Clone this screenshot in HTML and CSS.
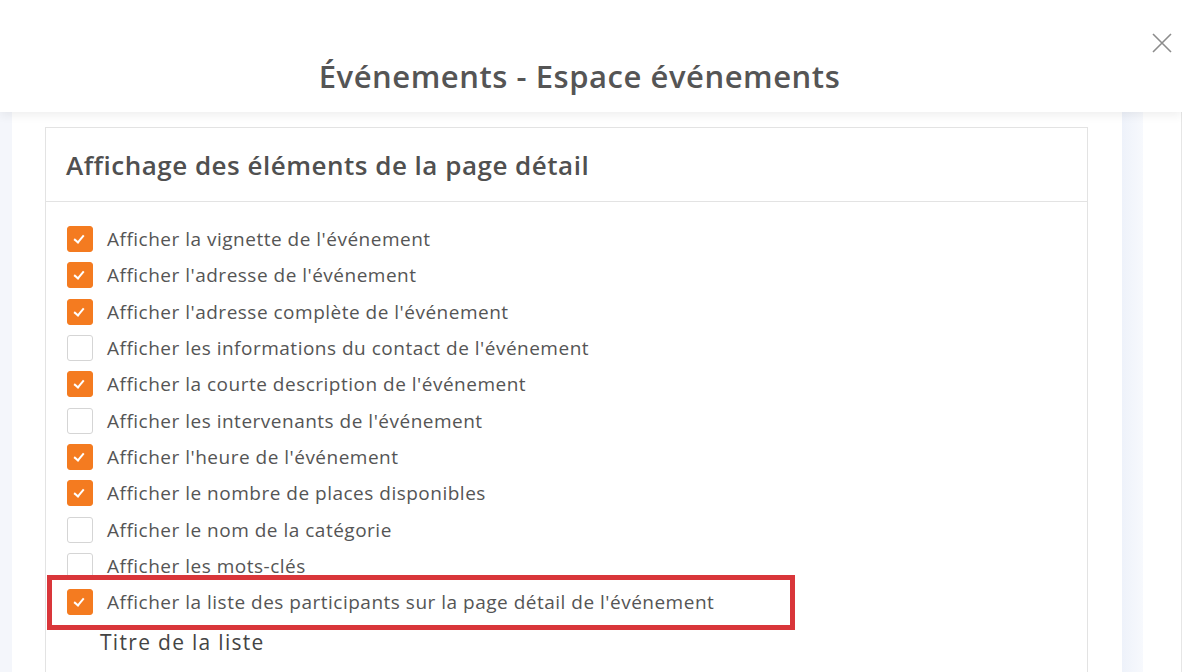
FILE: index.html
```html
<!DOCTYPE html>
<html lang="fr">
<head>
  <meta charset="UTF-8">
  <meta name="viewport" content="width=device-width, initial-scale=1.0">
  <title>Événements - Espace événements</title>
  <link rel="stylesheet" href="styles.css">
</head>
<body>

  <header class="modal-header">
    <h1>Événements - Espace événements</h1>
    <button class="close-btn" aria-label="Fermer">
      <svg width="22" height="22" viewBox="0 0 22 22"><path d="M2 2 L20 20 M20 2 L2 20" stroke="#8c8c8c" stroke-width="1.6" fill="none"/></svg>
    </button>
  </header>

  <div class="layout">
    <div class="side-left"></div>

    <main class="panel">
      <section class="card">
        <div class="card-header">
          <h2>Affichage des éléments de la page détail</h2>
        </div>

        <div class="card-body">
          <label class="option"><span class="box checked"></span>Afficher la vignette de l'événement</label>
          <label class="option"><span class="box checked"></span>Afficher l'adresse de l'événement</label>
          <label class="option"><span class="box checked"></span>Afficher l'adresse complète de l'événement</label>
          <label class="option"><span class="box"></span>Afficher les informations du contact de l'événement</label>
          <label class="option"><span class="box checked"></span>Afficher la courte description de l'événement</label>
          <label class="option"><span class="box"></span>Afficher les intervenants de l'événement</label>
          <label class="option"><span class="box checked"></span>Afficher l'heure de l'événement</label>
          <label class="option"><span class="box checked"></span>Afficher le nombre de places disponibles</label>
          <label class="option"><span class="box"></span>Afficher le nom de la catégorie</label>
          <label class="option"><span class="box"></span>Afficher les mots-clés</label>
          <label class="option highlighted"><span class="box checked"></span>Afficher la liste des participants sur la page détail de l'événement</label>

          <div class="sub-title">Titre de la liste</div>
        </div>
      </section>
    </main>

    <div class="side-strip"></div>
    <div class="side-right"></div>
  </div>

</body>
</html>
```

FILE: styles.css
```css
html, body {
  margin: 0;
  height: 100%;
  overflow: hidden;
}

body {
  font-family: 'Open Sans', 'Noto Sans', sans-serif;
  background-color: #fff;
  color: #555;
  display: flex;
  flex-direction: column;
}

.modal-header {
  position: relative;
  height: 112px;
  background-color: #fff;
  box-shadow: 0 3px 10px rgba(0, 0, 0, 0.07); /* soft edge under the header */
  z-index: 2;
  display: flex;
  align-items: center;
  justify-content: center;
  padding-right: 23px;
  flex-shrink: 0;
}

.modal-header h1 {
  margin: 40px 0 0 0;
  font-size: 31px;
  font-weight: 600;
  letter-spacing: 0.55px;
  color: #555;
}

.close-btn {
  position: absolute;
  top: 32px;
  right: 9px;
  border: none;
  background: none;
  padding: 0;
  cursor: pointer;
}

.layout {
  flex: 1;
  display: flex;
}

.side-left {
  width: 12px;
  background-color: #f4f6fb;
}

.panel {
  width: 1110px;
  background-color: #fff;
  padding: 15px 0 0 33px;
  box-sizing: border-box;
}

.side-strip {
  width: 21px;
  background: linear-gradient(to right, #eef2fa, #f7f9fd);
}

.side-right {
  flex: 1;
  background-color: #fff;
  border-right: 1px solid #e6e6e6;
}

.card {
  width: 1043px;
  height: 100%;
  border: 1px solid #e3e3e3;
  border-bottom: none;
  box-sizing: border-box;
}

.card-header {
  height: 73px;
  border-bottom: 1px solid #e3e3e3;
  display: flex;
  align-items: center;
  padding-left: 20px;
}

.card-header h2 {
  margin: 0;
  font-size: 26px;
  font-weight: 600;
  letter-spacing: 0.5px;
  color: #505050;
}

.card-body {
  padding: 19px 0 0 21px;
}

.option {
  position: relative;
  height: 36.3px;
  display: flex;
  align-items: center;
  font-size: 19px;
  letter-spacing: 0.5px;
  color: #555;
}

.box {
  width: 24px;
  height: 24px;
  border: 1px solid #d5d5d5;
  border-radius: 3px;
  background-color: #fff;
  margin-right: 14px;
  flex-shrink: 0;
  position: relative;
}

.box.checked {
  background-color: #f47b20;
  border-color: #f47b20;
}

.box.checked::after {
  content: '';
  position: absolute;
  left: 8px;
  top: 6px;
  width: 4px;
  height: 8px;
  border: solid #fff;
  border-width: 0 2.5px 2.5px 0;
  transform: rotate(40deg);
}

/* red annotation frame round the last option */
.highlighted::before {
  content: '';
  position: absolute;
  left: -20px;
  top: -9px;
  width: 738px;
  height: 45px;
  border: 5px solid #d9363a;
}

.sub-title {
  margin: 8px 0 0 33px;
  font-size: 21px;
  letter-spacing: 1.3px;
  color: #444;
}
```
